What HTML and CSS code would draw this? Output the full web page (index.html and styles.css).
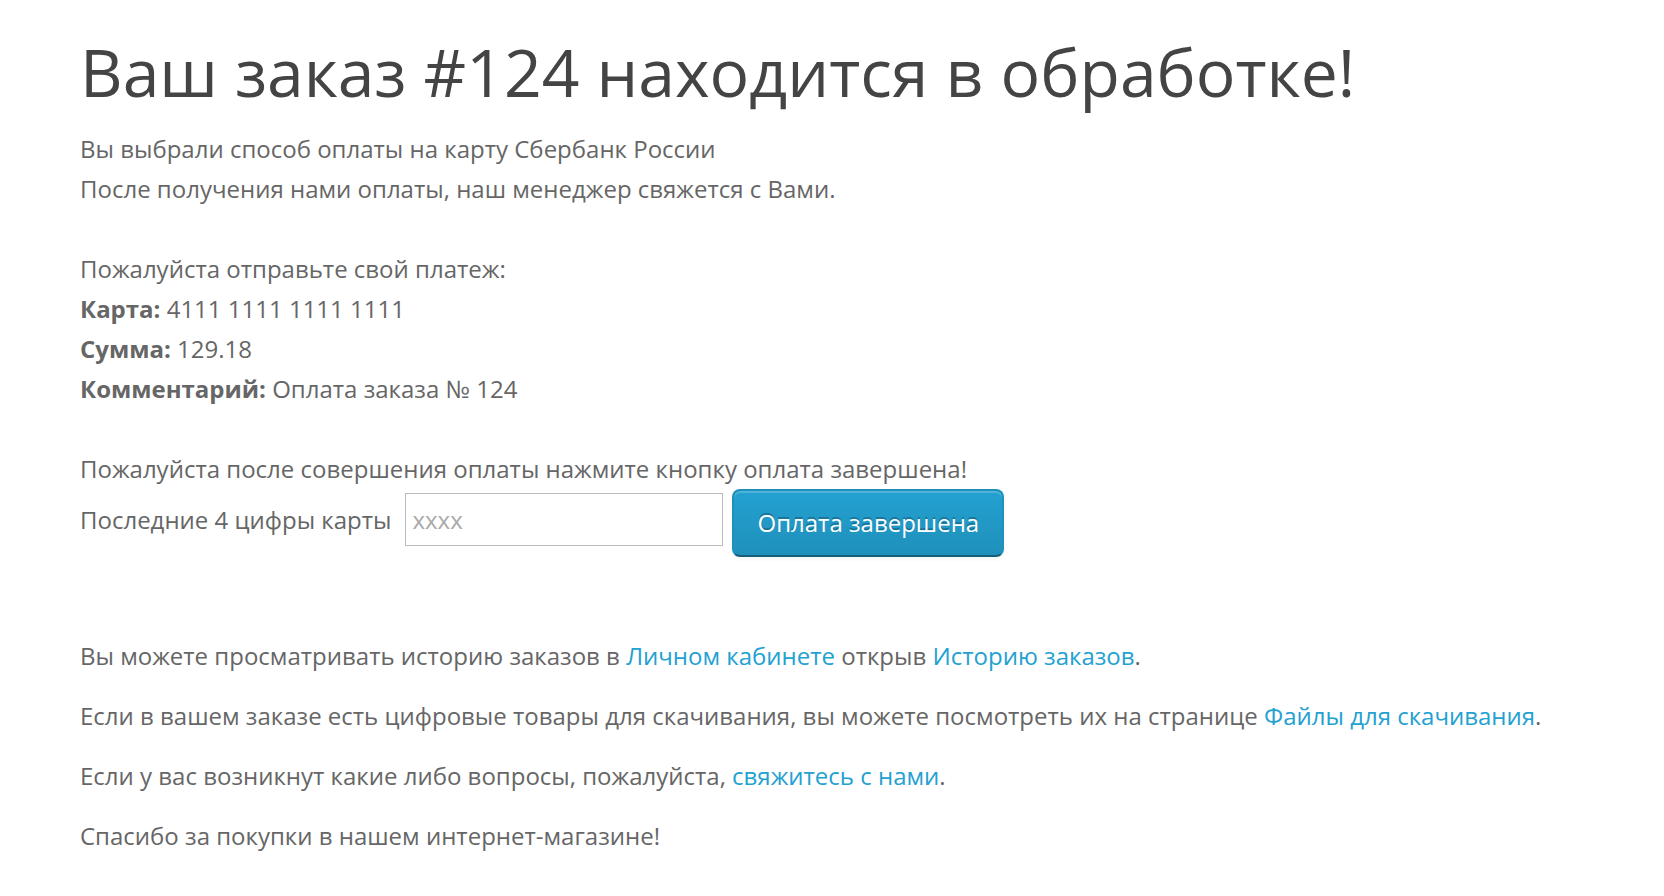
FILE: index.html
```html
<!DOCTYPE html>
<html lang="ru">
<head>
	<meta charset="UTF-8">
	<meta name="viewport" content="width=device-width, initial-scale=1.0">
	<title>Заказ в обработке</title>
	<link rel="stylesheet" href="styles.css">
</head>
<body>

<div id="content">
	<h1>Ваш заказ #124 находится в обработке!</h1>
	<div class="payment_info">
		Вы выбрали способ оплаты на карту Сбербанк России<br>
		После получения нами оплаты, наш менеджер свяжется с Вами.<br>
		<br>
		Пожалуйста отправьте свой платеж:<br>
		<b>Карта:</b> 4111 1111 1111 1111<br>
		<b>Сумма:</b> 129.18<br>
		<b>Комментарий:</b> Оплата заказа № 124<br>
		<br>
		Пожалуйста после совершения оплаты нажмите кнопку оплата завершена!
	</div>
	<div class="confirm_row">
		<label for="card_digits">Последние 4 цифры карты</label>
		<input type="text" id="card_digits" placeholder="xxxx">
		<button class="btn_primary">Оплата завершена</button>
	</div>

	<div class="text_block">
		<p>Вы можете просматривать историю заказов в <a href="#">Личном кабинете</a> открыв <a href="#">Историю заказов</a>.</p>
		<p>Если в вашем заказе есть цифровые товары для скачивания, вы можете посмотреть их на странице <a href="#">Файлы для скачивания</a>.</p>
		<p>Если у вас возникнут какие либо вопросы, пожалуйста, <a href="#">свяжитесь с нами</a>.</p>
		<p>Спасибо за покупки в нашем интернет-магазине!</p>
	</div>
</div>

</body>
</html>
```

FILE: styles.css
```css
html, body {
	margin: 0;
	padding: 0;
	background-color: #fff;
}

body {
	font-family: "Open Sans", "Liberation Sans", sans-serif;
	font-size: 24px;
	line-height: 40px;
	color: #666;
}

#content {
	padding: 35px 80px 0 80px;
}

h1 {
	font-size: 66px;
	font-weight: normal;
	line-height: 72.6px;
	color: #444;
	margin: 0 0 21px 0;
}

b {
	font-weight: bold;
}

.confirm_row {
	display: flex;
	align-items: flex-start;
}

.confirm_row label {
	margin: 11px 14px 0 0;
}

.confirm_row input {
	box-sizing: border-box;
	width: 318px;
	height: 53px;
	padding: 0 6px;
	margin: 4px 9px 0 0;
	border: 1px solid #bbb;
	font-family: "Open Sans", "Liberation Sans", sans-serif;
	font-size: 24px;
	color: #555;
	outline: none;
}

.confirm_row input::placeholder {
	color: #aaa;
}

.btn_primary {
	font-family: "Open Sans", "Liberation Sans", sans-serif;
	font-size: 24px;
	line-height: 34px;
	padding: 15px 23px;
	color: #fff;
	text-shadow: 0 -2px 0 rgba(0, 0, 0, 0.25);
	background-image: linear-gradient(to bottom, #23a1d1, #1f90bb);
	border: 2px solid #1f90bb;
	border-bottom-color: #145e7a;
	border-radius: 8px;
	box-shadow: inset 0 2px 0 rgba(255, 255, 255, 0.2), 0 2px 4px rgba(0, 0, 0, 0.05);
	cursor: pointer;
}

.text_block {
	margin-top: 79px;
}

.text_block p {
	margin: 0 0 20px 0;
}

a {
	color: #23a1d1;
	text-decoration: none;
}
```
